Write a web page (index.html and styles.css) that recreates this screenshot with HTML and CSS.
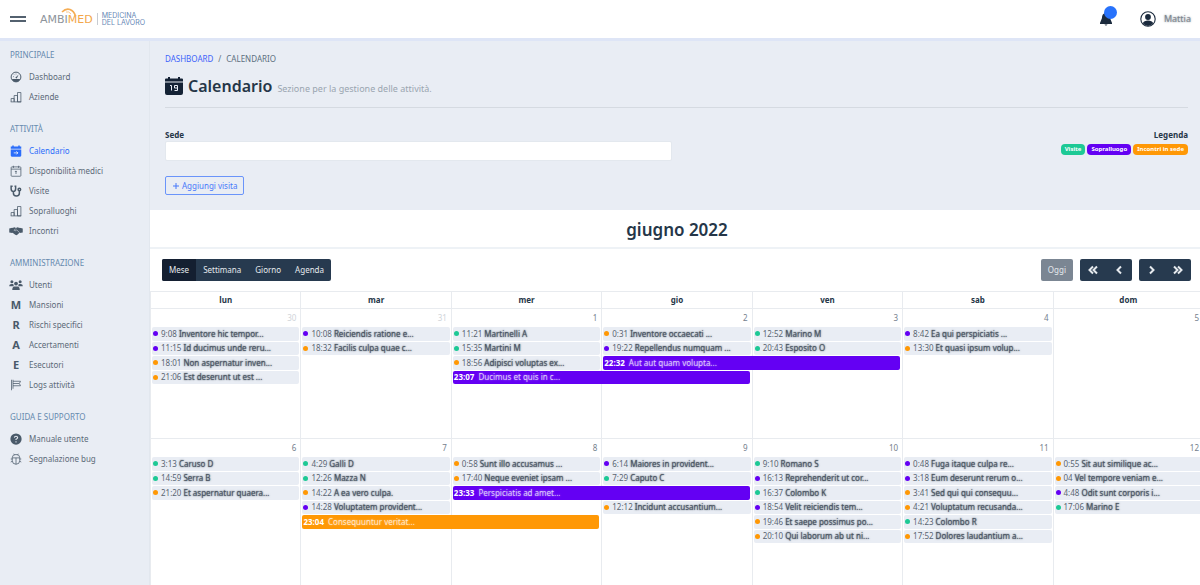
FILE: index.html
```html
<!DOCTYPE html>
<html lang="it">
<head>
<meta charset="utf-8">
<title>Calendario</title>
<link rel="stylesheet" href="styles.css">
</head>
<body>
<header class="topbar">
  <button class="menu-btn" type="button" aria-label="Menu"><span></span><span></span></button>
  <a class="logo" href="#">
    <span class="logo-name"><span>AMBI</span><b>MED</b>
      <svg class="logo-arc" viewBox="0 0 18 9" aria-hidden="true"><path d="M2 4Q6 0 10 1.500Q14 3 15.500 8" fill="none" stroke="#f5ad55" stroke-width="1.600"/><path d="M6 4Q9 3 11 6" fill="none" stroke="#f8c88f"/></svg>
    </span>
    <span class="logo-sub"><span>MEDICINA</span><span>DEL LAVORO</span></span>
  </a>
  <div class="account">
    <button class="bell" type="button" aria-label="Notifiche">
      <svg viewBox="0 0 16 16"><path d="M8 2C5 2 4 4.500 4 7L2 12V13H14V12L12 7C12 4.500 11 2 8 2ZM6.500 13.500A1.600 1.600 0 0 0 9.500 13.500Z"/></svg>
      <span class="dot-badge"></span>
    </button>
    <a class="user" href="#">
      <svg viewBox="0 0 16 16"><circle cx="8" cy="8" r="7.200" fill="none" stroke="currentColor" stroke-width="1.100"/><circle cx="8" cy="6" r="2.900"/><path d="M2.800 12.300Q4 9.600 8 9.600T13.200 12.300Q11 15 8 15T2.800 12.300Z"/></svg>
      <span class="soft">Mattia</span>
    </a>
  </div>
</header>
<div class="shell">
<nav class="sidebar">
  <section>
    <h2>PRINCIPALE</h2>
    <a href="#"><svg viewBox="0 0 16 16"><circle cx="8" cy="8" r="6.500" fill="none" stroke="currentColor" stroke-width="1.300"/><path d="M2.500 10.500H13.500Q12 14.500 8 14.500T2.500 10.500ZM7 9L11.500 4.500L9 10Z"/><path d="M4 7.500H5M5.500 4.700L6.200 5.400M8 3.500V4.500" stroke="currentColor"/></svg>Dashboard</a>
    <a href="#"><svg class="line" viewBox="0 0 16 16"><path d="M1.500 14.500V10H5.500V14.500M5.500 14.500V6H10V14.500M10 14.500V2H14.500V14.500ZM1 14.500H15"/></svg>Aziende</a>
  </section>
  <section>
    <h2>ATTIVITÀ</h2>
    <a href="#" class="current" aria-current="page"><svg viewBox="0 0 16 16"><path d="M1 2H3V0.500H5V2H11V0.500H13V2H15V5H1ZM1 6H15V14Q15 15.500 13.500 15.500H2.500Q1 15.500 1 14Z"/><path d="M5 10.500H10.500M8.500 8.500L10.500 10.500L8.500 12.500" fill="none" stroke="#fff"/></svg>Calendario</a>
    <a href="#"><svg class="line" viewBox="0 0 16 16"><rect x="1.500" y="2.500" width="13" height="12.500" rx="1"/><path d="M1.500 5.500H14.500M4.500 1V4M11.500 1V4M8 8V12M6.500 8.500H9"/></svg>Disponibilità medici</a>
    <a href="#"><svg class="line heavy" viewBox="0 0 16 16"><path d="M3.500 1.500H1.500V5Q1.500 8.500 4.500 8.500T7.500 5V1.500H6M4.500 8.500V10.500Q4.500 14.500 8.500 14.500T12.500 11V8"/><circle cx="12.500" cy="6" r="1.700"/></svg>Visite</a>
    <a href="#"><svg class="line" viewBox="0 0 16 16"><path d="M1.500 14.500V10H5.500V14.500M5.500 14.500V6H10V14.500M10 14.500V2H14.500V14.500ZM1 14.500H15"/></svg>Sopralluoghi</a>
    <a href="#"><svg class="wide" viewBox="1 1 16 12"><path d="M0 3.500L4 2.500V9.500L0 9ZM18 3.500L14 2.500V9.500L18 9ZM4 3L7 2L9 3L11 2L14 3V9L10 12.500L8 12L4 9Z"/><path d="M9 3.500L6.500 6Q8 7.500 10 5.500L13.500 9" fill="none" stroke="#e9edf4" stroke-width=".7"/></svg>Incontri</a>
  </section>
  <section>
    <h2>AMMINISTRAZIONE</h2>
    <a href="#"><svg class="wide" viewBox="1 1 16 12"><circle cx="3.500" cy="2.500" r="2"/><circle cx="14.500" cy="2.500" r="2"/><circle cx="9" cy="5" r="2.500"/><path d="M0 8Q0 5.500 3 5.500H5.500Q5 8 7 8.500H0ZM18 8Q18 5.500 15 5.500H12.500Q13 8 11 8.500H18ZM4 13.500Q4 9 7.500 9H10.500Q14 9 14 13.500Z"/></svg>Utenti</a>
    <a href="#"><b>M</b>Mansioni</a>
    <a href="#"><b>R</b>Rischi specifici</a>
    <a href="#"><b>A</b>Accertamenti</a>
    <a href="#"><b>E</b>Esecutori</a>
    <a href="#"><svg class="line" viewBox="0 0 16 16"><path d="M2 1V15M4 1V13M4 3H14L12.500 6L14 9H4M4 6H12"/></svg>Logs attività</a>
  </section>
  <section>
    <h2>GUIDA E SUPPORTO</h2>
    <a href="#"><svg viewBox="0 0 16 16"><circle cx="8" cy="8" r="7.500"/><path d="M5.800 6.200Q6 4.200 8 4.200T10.200 6.200Q10.200 7.200 8 8.300V9.300M8 11V12.500" fill="none" stroke="#e9edf4" stroke-width="1.400"/></svg>Manuale utente</a>
    <a href="#"><svg class="line" viewBox="0 0 16 16"><path d="M3 6Q3 2 8 2T13 6V10Q13 15 8 15T3 10ZM3 6.500H13M8 6.500V15M1 8H3M13 8H15M1 12L3 11M15 12L13 11M5 1L6 2.500M11 1L10 2.500"/></svg>Segnalazione bug</a>
  </section>
</nav>
<main class="main">
  <div class="intro">
    <nav class="crumbs"><a href="#">DASHBOARD</a><span>/</span><span>CALENDARIO</span></nav>
    <div class="heading">
      <svg viewBox="0 0 18 18" aria-hidden="true"><path d="M1 1.500H3V0H5V1.500H13V0H15V1.500H17Q18 1.500 18 2.500V4.500H0V2.500Q0 1.500 1 1.500ZM0 5.500H18V16Q18 18 16 18H2Q0 18 0 16Z"/><path d="M5 8.500H6.500V13.500M12.500 13.500V8.500H9.500V11H12.500M12.500 13.500H9.500" fill="none" stroke="#e9edf4"/></svg>
      <h1>Calendario</h1><p>Sezione per la gestione delle attività.</p>
    </div>
    <div class="filters">
      <div class="field"><label for="sede">Sede</label><input id="sede" type="text"></div>
      <div class="legend"><strong>Legenda</strong>
        <div><span class="badge green">Visite</span><span class="badge purple">Sopralluogo</span><span class="badge orange">Incontri in sede</span></div>
      </div>
    </div>
    <button class="add" type="button"><svg viewBox="0 0 8 8" aria-hidden="true"><path d="M4 1V7M1 4H7"/></svg>Aggiungi visita</button>
  </div>
  <div class="calendar">
    <h2 class="month">giugno 2022</h2>
    <div class="toolbar">
      <div class="group views"><button class="active" type="button">Mese</button><button type="button">Settimana</button><button type="button">Giorno</button><button type="button">Agenda</button></div>
      <div class="moves">
        <button class="today" type="button" disabled>Oggi</button>
        <div class="group arrows"><button type="button" aria-label="Anno precedente"><svg viewBox="0 0 10 10"><path d="M5 1.500L1.500 5L5 8.500M9 1.500L5.500 5L9 8.500"/></svg></button><button type="button" aria-label="Mese precedente"><svg viewBox="0 0 10 10"><path d="M7 1.500L3.500 5L7 8.500"/></svg></button></div>
        <div class="group arrows"><button type="button" aria-label="Mese successivo"><svg viewBox="0 0 10 10"><path d="M3 1.500L6.500 5L3 8.500"/></svg></button><button type="button" aria-label="Anno successivo"><svg viewBox="0 0 10 10"><path d="M1 1.500L4.500 5L1 8.500M5 1.500L8.500 5L5 8.500"/></svg></button></div>
      </div>
    </div>
    <table class="grid">
      <thead><tr><th>lun</th><th>mar</th><th>mer</th><th>gio</th><th>ven</th><th>sab</th><th>dom</th></tr></thead>
      <tbody>
      <tr>
        <td class="other"><time>30</time><div class="events">
          <a href="#" class="ev p"><time>9:08</time><span>Inventore hic tempor...</span></a>
          <a href="#" class="ev p"><time>11:15</time><span>Id ducimus unde reru...</span></a>
          <a href="#" class="ev o"><time>18:01</time><span>Non aspernatur inven...</span></a>
          <a href="#" class="ev o"><time>21:06</time><span>Est deserunt ut est ...</span></a></div></td>
        <td class="other"><time>31</time><div class="events">
          <a href="#" class="ev p"><time>10:08</time><span>Reiciendis ratione e...</span></a>
          <a href="#" class="ev o"><time>18:32</time><span>Facilis culpa quae c...</span></a></div></td>
        <td><time>1</time><div class="events">
          <a href="#" class="ev g"><time>11:21</time><span>Martinelli A</span></a>
          <a href="#" class="ev g"><time>15:35</time><span>Martini M</span></a>
          <a href="#" class="ev o"><time>18:56</time><span>Adipisci voluptas ex...</span></a>
          <a href="#" class="bar purple"><time>23:07</time><span>Ducimus et quis in c...</span></a></div></td>
        <td><time>2</time><div class="events">
          <a href="#" class="ev o"><time>0:31</time><span>Inventore occaecati ...</span></a>
          <a href="#" class="ev p"><time>19:22</time><span>Repellendus numquam ...</span></a>
          <a href="#" class="bar purple"><time>22:32</time><span>Aut aut quam volupta...</span></a></div></td>
        <td><time>3</time><div class="events">
          <a href="#" class="ev g"><time>12:52</time><span>Marino M</span></a>
          <a href="#" class="ev g"><time>20:43</time><span>Esposito O</span></a></div></td>
        <td><time>4</time><div class="events">
          <a href="#" class="ev p"><time>8:42</time><span>Ea qui perspiciatis ...</span></a>
          <a href="#" class="ev o"><time>13:30</time><span>Et quasi ipsum volup...</span></a></div></td>
        <td><time>5</time><div class="events"></div></td>
      </tr>
      <tr>
        <td><time>6</time><div class="events">
          <a href="#" class="ev g"><time>3:13</time><span>Caruso D</span></a>
          <a href="#" class="ev g"><time>14:59</time><span>Serra B</span></a>
          <a href="#" class="ev o"><time>21:20</time><span>Et aspernatur quaera...</span></a></div></td>
        <td><time>7</time><div class="events">
          <a href="#" class="ev g"><time>4:29</time><span>Galli D</span></a>
          <a href="#" class="ev g"><time>12:26</time><span>Mazza N</span></a>
          <a href="#" class="ev o"><time>14:22</time><span>A ea vero culpa.</span></a>
          <a href="#" class="ev p"><time>14:28</time><span>Voluptatem provident...</span></a>
          <a href="#" class="bar orange"><time>23:04</time><span>Consequuntur veritat...</span></a></div></td>
        <td><time>8</time><div class="events">
          <a href="#" class="ev o"><time>0:58</time><span>Sunt illo accusamus ...</span></a>
          <a href="#" class="ev o"><time>17:40</time><span>Neque eveniet ipsam ...</span></a>
          <a href="#" class="bar purple"><time>23:33</time><span>Perspiciatis ad amet...</span></a></div></td>
        <td><time>9</time><div class="events">
          <a href="#" class="ev p"><time>6:14</time><span>Maiores in provident...</span></a>
          <a href="#" class="ev g"><time>7:29</time><span>Caputo C</span></a>
          <a href="#" class="ev o fourth"><time>12:12</time><span>Incidunt accusantium...</span></a></div></td>
        <td><time>10</time><div class="events">
          <a href="#" class="ev g"><time>9:10</time><span>Romano S</span></a>
          <a href="#" class="ev p"><time>16:13</time><span>Reprehenderit ut cor...</span></a>
          <a href="#" class="ev g"><time>16:37</time><span>Colombo K</span></a>
          <a href="#" class="ev p"><time>18:54</time><span>Velit reiciendis tem...</span></a>
          <a href="#" class="ev o"><time>19:46</time><span>Et saepe possimus po...</span></a>
          <a href="#" class="ev o"><time>20:10</time><span>Qui laborum ab ut ni...</span></a></div></td>
        <td><time>11</time><div class="events">
          <a href="#" class="ev p"><time>0:48</time><span>Fuga itaque culpa re...</span></a>
          <a href="#" class="ev p"><time>3:18</time><span>Eum deserunt rerum o...</span></a>
          <a href="#" class="ev o"><time>3:41</time><span>Sed qui qui consequu...</span></a>
          <a href="#" class="ev o"><time>4:21</time><span>Voluptatum recusanda...</span></a>
          <a href="#" class="ev g"><time>14:23</time><span>Colombo R</span></a>
          <a href="#" class="ev o"><time>17:52</time><span>Dolores laudantium a...</span></a></div></td>
        <td><time>12</time><div class="events">
          <a href="#" class="ev o"><time>0:55</time><span>Sit aut similique ac...</span></a>
          <a href="#" class="ev o"><time>04</time><span>Vel tempore veniam e...</span></a>
          <a href="#" class="ev p"><time>4:48</time><span>Odit sunt corporis i...</span></a>
          <a href="#" class="ev g"><time>17:06</time><span>Marino E</span></a></div></td>
      </tr>
      </tbody>
    </table>
  </div>
</main>
</div>
</body>
</html>
```

FILE: styles.css
```css
* { box-sizing: border-box; }
body { margin: 0; height: 100vh; display: flex; flex-direction: column; overflow: hidden; background: #e9edf4; color: #253648; font: 8px/12px "Noto Sans", "Open Sans", sans-serif; }
a { color: inherit; text-decoration: none; }
button { font: inherit; cursor: pointer; }
h1, h2, p { margin: 0; }
svg { fill: currentColor; flex: none; }

.topbar { display: flex; flex: none; align-items: center; height: 41px; padding: 0 9px 0 10px; background: #fff; border-bottom: 3px solid #dee5f6; }
.menu-btn { display: flex; flex-direction: column; gap: 2px; width: 16px; padding: 0; border: 0; background: none; }
.menu-btn span { height: 2px; background: #53616f; }
.logo { display: flex; align-items: center; gap: 4px; margin-left: 14px; }
.logo-name { position: relative; display: flex; padding: 2px 4px 0 0; border-right: 1px solid #c8ccd2; color: #8e949b; font: 11px/10px "DejaVu Sans", sans-serif; }
.logo-name b { color: #f3a64a; font-weight: 400; }
.logo-arc { position: absolute; left: 20px; top: -5px; width: 18px; height: 9px; }
.logo-sub { display: flex; flex-direction: column; color: #6687b5; font: 7px/7px Inter, sans-serif; }
.account { display: flex; align-items: center; gap: 26px; margin-left: auto; color: #1b2a3d; }
.bell { position: relative; display: flex; padding: 0; border: 0; background: none; color: inherit; }
.bell svg { width: 16px; height: 16px; }
.dot-badge { position: absolute; left: 6px; top: -5px; width: 13px; height: 13px; border-radius: 50%; background: #2872fb; }
.user { display: flex; align-items: center; gap: 8px; }
.user svg { width: 16px; height: 16px; }
.soft { color: #7d868f; font-size: 9px; text-shadow: 0 0 2px #7d868f; }

.shell { display: flex; flex: 1; min-height: 0; }
.sidebar { display: flex; flex-direction: column; flex: none; gap: 16px; width: 150px; padding: 8px 0 0 10px; border-right: 1px solid #e2e7ee; }
.sidebar h2 { margin-bottom: 6px; color: #668aaf; font-size: 8px; line-height: 12px; font-weight: 400; }
.sidebar a { display: flex; align-items: center; gap: 7px; height: 20px; color: #5c6a78; }
.sidebar svg, .sidebar a b { width: 12px; height: 12px; color: #4a5a6a; }
.sidebar .wide { overflow: visible; }
.sidebar a b { font: 700 11px/12px "Noto Sans", sans-serif; text-align: center; }
.sidebar .current, .sidebar .current svg { color: #2b6dfa; }
.line { fill: none; stroke: currentColor; }
.heavy { stroke-width: 2; }

.main { flex: 1; min-width: 0; }
.intro { padding: 12px 12px 15px 15px; }
.crumbs { display: flex; gap: 5px; color: #5c6f80; }
.crumbs a { color: #3d63fa; }
.heading { display: flex; align-items: center; gap: 5px; height: 43px; border-bottom: 1px solid #d5dae1; color: #142235; }
.heading svg { width: 18px; height: 18px; }
.heading h1 { color: #253648; font-size: 16px; line-height: 24px; font-weight: 600; }
.heading p { padding-top: 6px; color: #9aa5b0; font-size: 9px; }
.filters { display: flex; justify-content: space-between; padding-top: 21px; }
.field { display: flex; flex-direction: column; width: 50%; padding-right: 5px; }
.field label, .legend strong { font-weight: 700; line-height: 12px; }
.field input { height: 20px; border: 1px solid #e3e8ee; border-radius: 2px; background: #fff; font: inherit; }
.legend { text-align: right; }
.legend strong { display: block; }
.legend div { display: flex; gap: 2px; padding-top: 3px; }
.badge { padding: 0 4px; border-radius: 4px; color: #fff; font-size: 6px; line-height: 11px; font-weight: 700; }
.green { background: #1dc995; }
.purple { background: #6400f3; }
.orange { background: #ff9805; }
.add { display: flex; align-items: center; gap: 2px; height: 19px; margin-top: 15px; padding: 0 6px; border: 1px solid #6a94fa; border-radius: 2px; background: none; color: #4778fa; }
.add svg { width: 8px; height: 8px; stroke: currentColor; }

.calendar { margin-right: -4px; background: #fff; }
.month { height: 39px; border-bottom: 2px solid #eef2f6; color: #253648; font-size: 17px; line-height: 40px; font-weight: 600; text-align: center; }
.toolbar { display: flex; align-items: center; justify-content: space-between; height: 42px; padding: 0 13px 0 12px; }
.group { display: flex; overflow: hidden; border-radius: 2px; background: #273a4f; }
.group button, .today { height: 22px; padding: 0 7px; border: 0; background: none; color: #e6eaee; }
.group .active { background: #141f31; }
.moves { display: flex; gap: 7px; }
.moves .today { border-radius: 2px; background: #7b8693; }
.arrows button { display: flex; align-items: center; justify-content: center; width: 26px; }
.arrows svg { width: 10px; height: 10px; fill: none; stroke: currentColor; stroke-width: 2; }

.grid { width: 100%; table-layout: fixed; border-collapse: collapse; }
.grid th, .grid td { padding: 0; border: 1px solid #e8ebef; vertical-align: top; }
.grid th { height: 17px; font-weight: 700; line-height: 16px; }
.grid td { height: 130px; }
.grid tbody tr:last-child td { height: 150px; border-bottom: 0; }
.grid td > time { display: block; padding-right: 4px; color: #74808d; line-height: 18px; text-align: right; }
.grid .other > time { color: #d0d4d9; }
.events { display: grid; grid-template-rows: repeat(6, 1fr); gap: 1px; height: 86px; padding: 0 1px; }
.ev { display: flex; align-items: center; gap: 2px; min-width: 0; padding-left: 1px; border-radius: 2px; background: #e9edf4; white-space: nowrap; color: #596572; }
.ev::before { content: ""; flex: none; width: 5px; height: 5px; margin-right: 1px; border-radius: 50%; background: currentColor; }
.ev.g::before { background: #1dc995; }
.ev.p::before { background: #6400f3; }
.ev.o::before { background: #ff9805; }
.ev span { color: rgba(60, 72, 86, .8); text-shadow: 0 0 1px rgba(60, 72, 86, .7), 0 0 2px rgba(60, 72, 86, .6); }
.fourth { grid-row: 4; }
.bar { position: relative; z-index: 1; display: flex; align-items: center; gap: 4px; width: calc(200% + 2px); padding-left: 1px; border-radius: 2px; color: #fff; white-space: nowrap; }
.bar time { font-weight: 700; }
.bar span { color: rgba(255, 255, 255, .75); text-shadow: 0 0 2px rgba(255, 255, 255, .5); }
```
